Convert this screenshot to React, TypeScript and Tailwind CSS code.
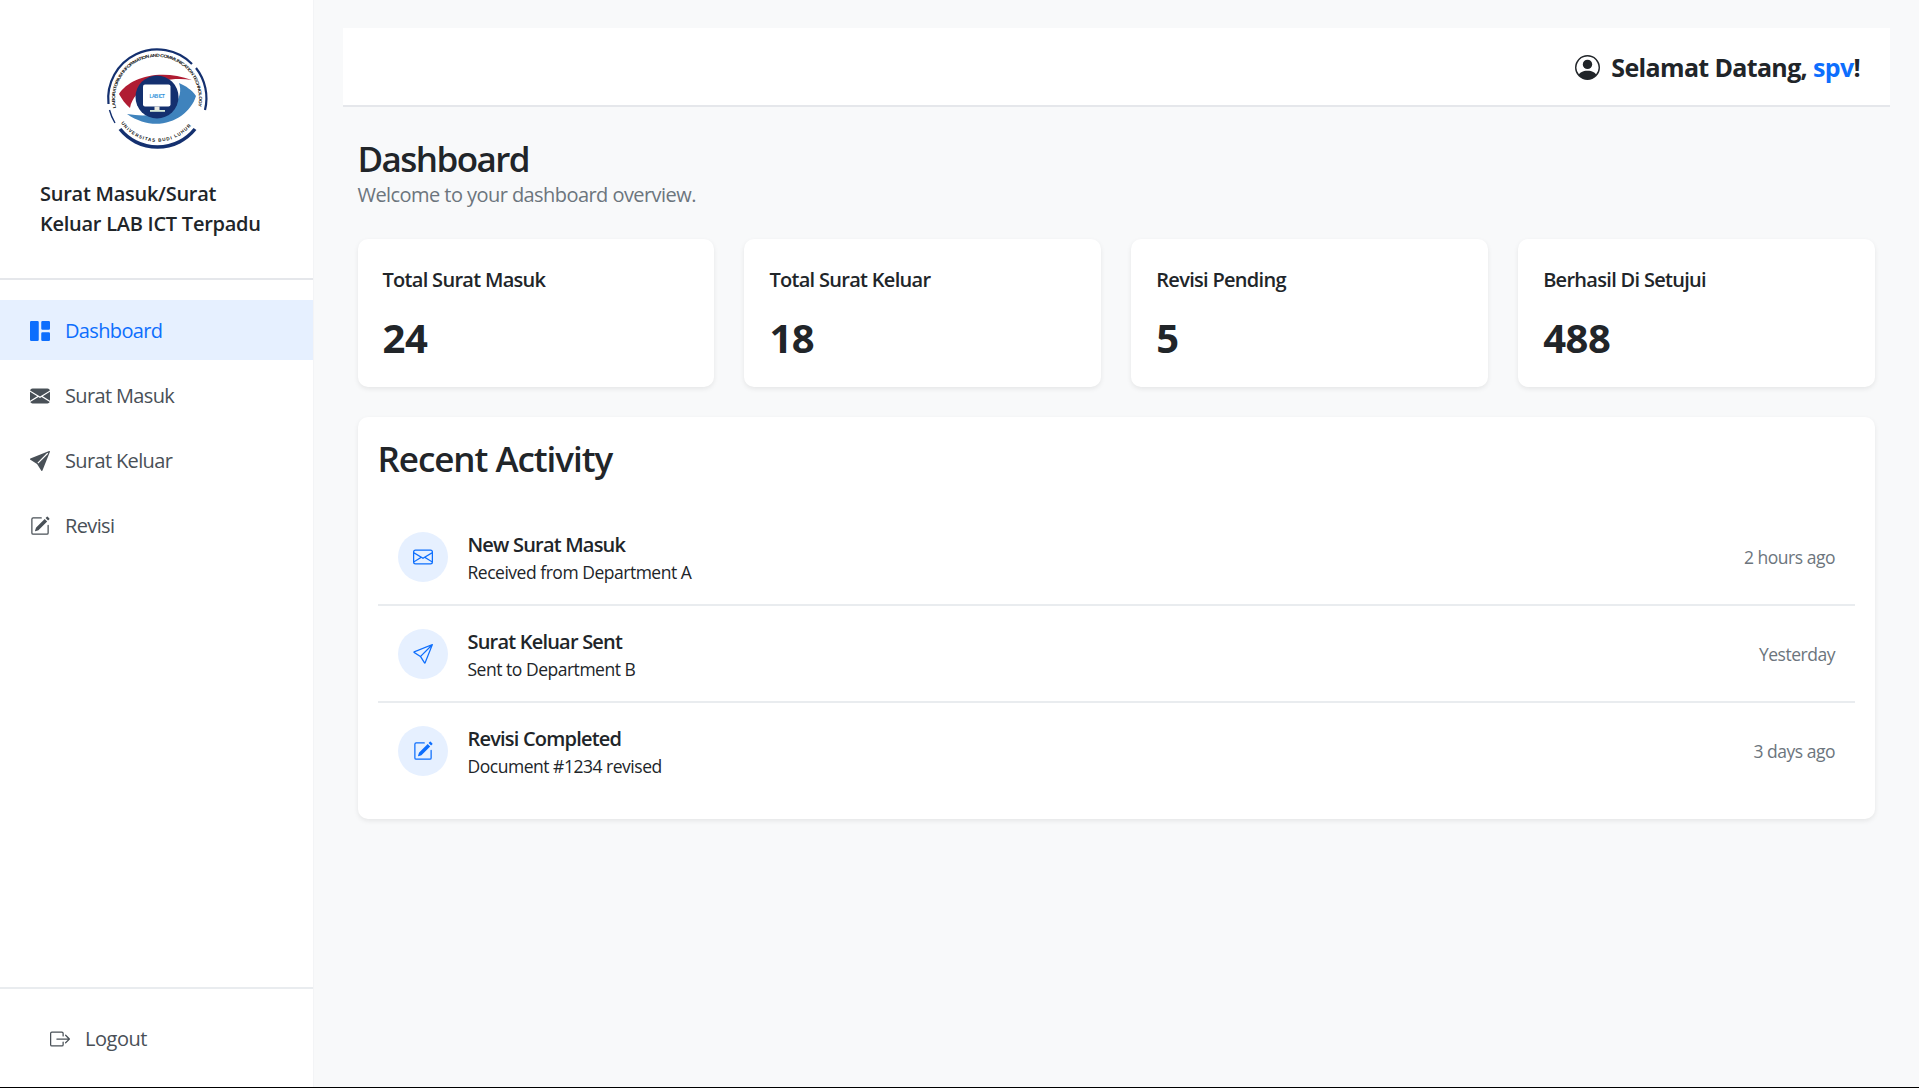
import { BsGrid1X2Fill, BsEnvelopeFill, BsSendFill, BsPencilSquare, BsEnvelope, BsSend, BsBoxArrowRight, BsPersonCircle } from "react-icons/bs";

function Logo() {
  return (
    <svg viewBox="0 0 100 100" className="w-[100px] h-[100px] overflow-visible">
      <defs>
        <path id="arcTop" d="M 9 60 A 42 42 0 1 1 91 60" />
        <path id="arcBottom" d="M 14 75 A 44 44 0 0 0 86 75" />
      </defs>
      <path d="M 1.5 56 A 49 49 0 0 1 85 16" fill="none" stroke="#14306f" strokeWidth="2.2" />
      <path d="M 89 20 A 49 49 0 0 1 98 62" fill="none" stroke="#14306f" strokeWidth="2.2" />
      <path d="M 13 81 A 48 48 0 0 0 88 81" fill="none" stroke="#14306f" strokeWidth="3.6" />
      <path d="M 2.5 62 A 49 49 0 0 0 8 75" fill="none" stroke="#14306f" strokeWidth="1.4" />
      <text fontSize="4.3" fontWeight="700" fill="#111" fontFamily="Liberation Sans, sans-serif">
        <textPath href="#arcTop" textLength="148" lengthAdjust="spacingAndGlyphs">LABORATORIUM INFORMATION AND COMMUNICATION TECHNOLOGY</textPath>
      </text>
      <text fontSize="4.6" fontWeight="700" fill="#111" fontFamily="Liberation Sans, sans-serif">
        <textPath href="#arcBottom" textLength="80" lengthAdjust="spacing">UNIVERSITAS BUDI LUHUR</textPath>
      </text>
      <path d="M 12 46 C 22 30, 52 20, 85 32 C 60 28, 28 36, 23 60 C 18 56, 15 51, 12 46 Z" fill="#b01c33" />
      <path d="M 20 66 C 50 87, 82 71, 89 48 C 85 42, 79 38, 72 35 C 78 52, 62 73, 20 66 Z" fill="#3f83bd" />
      <circle cx="50" cy="49" r="21.5" fill="#14306f" />
      <rect x="36" y="36.5" width="27.5" height="22" rx="2" fill="#fff" />
      <text x="50" y="49.5" textAnchor="middle" fontSize="4.6" fontWeight="700" fill="#2a8fd8" fontFamily="Liberation Sans, sans-serif">LAB ICT</text>
      <rect x="47.5" y="58.5" width="5" height="4" fill="#e8e8e0" />
      <rect x="43" y="62" width="15" height="1.8" fill="#d8ead8" />
    </svg>
  );
}

const nav = [
  { label: "Dashboard", Icon: BsGrid1X2Fill, active: true },
  { label: "Surat Masuk", Icon: BsEnvelopeFill },
  { label: "Surat Keluar", Icon: BsSendFill },
  { label: "Revisi", Icon: BsPencilSquare },
];

const stats = [
  { label: "Total Surat Masuk", value: "24" },
  { label: "Total Surat Keluar", value: "18" },
  { label: "Revisi Pending", value: "5" },
  { label: "Berhasil Di Setujui", value: "488" },
];

const activity = [
  { title: "New Surat Masuk", sub: "Received from Department A", time: "2 hours ago", Icon: BsEnvelope },
  { title: "Surat Keluar Sent", sub: "Sent to Department B", time: "Yesterday", Icon: BsSend },
  { title: "Revisi Completed", sub: "Document #1234 revised", time: "3 days ago", Icon: BsPencilSquare },
];

export default function App() {
  return (
    <div className="h-[1088px] bg-black font-['Open_Sans',sans-serif] text-[#212529] tracking-[-0.03em]">
      <div className="h-[1087px] flex bg-[#f8f9fa]">
        <aside className="w-[314px] shrink-0 bg-white flex flex-col border-r border-[#f3f4f6]">
          <div className="h-[280px] shrink-0 border-b-2 border-[#e5e7eb] flex flex-col">
            <div className="flex justify-center pt-[48px]">
              <Logo />
            </div>
            <div className="pl-10 pr-[36px] mt-[31px] text-[20px] leading-[30px] font-semibold tracking-[-0.013em]">
              Surat Masuk/Surat<br />Keluar LAB ICT Terpadu
            </div>
          </div>
          <nav className="mt-5 flex flex-col gap-[5px] flex-1 tracking-[-0.04em]">
            {nav.map(({ label, Icon, active }) => (
              <div
                key={label}
                className={`h-[60px] flex items-center pl-[30px] pt-[2px] gap-[15px] text-[20px] ${active ? "bg-[#e6f0ff] text-[#0d6efd] font-medium" : "text-[#495057]"}`}
              >
                <Icon className="w-5 h-5" />
                <span>{label}</span>
              </div>
            ))}
          </nav>
          <div className="h-[100px] shrink-0 border-t-2 border-[#e9ecef] flex items-center pl-[50px] pt-[2px] gap-[15px] text-[20px] text-[#495057]">
            <BsBoxArrowRight className="w-5 h-5" />
            <span>Logout</span>
          </div>
        </aside>
        <main className="flex-1 pl-[28.5px] pr-[29px] pt-[28px]">
          <header className="h-[79px] bg-white border-b-2 border-[#e5e7eb] flex items-center justify-end gap-[11px] pr-[30px] pt-[2px] text-[25px] font-bold tracking-[-0.026em]">
            <BsPersonCircle className="w-[25px] h-[25px]" />
            <span>
              Selamat Datang, <span className="text-[#0d6efd]">spv</span>!
            </span>
          </header>
          <div className="px-[15px]">
            <h1 className="mt-[31px] text-[35px] leading-[42px] font-semibold tracking-[-0.045em]">Dashboard</h1>
            <p className="text-[20px] leading-[30px] text-[#6c757d] tracking-[-0.028em]">Welcome to your dashboard overview.</p>
            <div className="mt-[29px] grid grid-cols-4 gap-[30px]">
              {stats.map((s) => (
                <div key={s.label} className="h-[148px] bg-white rounded-[10px] shadow-[0_2px_5px_rgba(0,0,0,0.08)] px-[25px] pt-[26px]">
                  <div className="text-[20px] leading-[30px] font-[550] tracking-[-0.035em]">{s.label}</div>
                  <div className="mt-[19px] text-[40px] leading-[48px] font-bold">{s.value}</div>
                </div>
              ))}
            </div>
            <section className="mt-[30px] h-[402px] bg-white rounded-[10px] shadow-[0_2px_5px_rgba(0,0,0,0.08)] px-5 pt-[21px]">
              <h2 className="text-[35px] leading-[42px] font-semibold tracking-[-0.03em]">Recent Activity</h2>
              <div className="mt-[29px]">
                {activity.map(({ title, sub, time, Icon }, i) => (
                  <div key={title} className={`h-[97px] flex items-center px-5 ${i < 2 ? "border-b-2 border-[#e9ecef]" : "pb-[2px]"}`}>
                    <div className="w-[50px] h-[50px] rounded-full bg-[#e6f0ff] flex items-center justify-center text-[#0d6efd] shrink-0">
                      <Icon className="w-5 h-5" />
                    </div>
                    <div className="ml-[20px] flex-1 pt-[2px]">
                      <div className="text-[20px] leading-[28px] font-semibold tracking-[-0.04em]">{title}</div>
                      <div className="text-[17.5px] leading-[26px]">{sub}</div>
                    </div>
                    <div className="text-[17.5px] pt-[2px] text-[#6c757d]">{time}</div>
                  </div>
                ))}
              </div>
            </section>
          </div>
        </main>
      </div>
    </div>
  );
}
